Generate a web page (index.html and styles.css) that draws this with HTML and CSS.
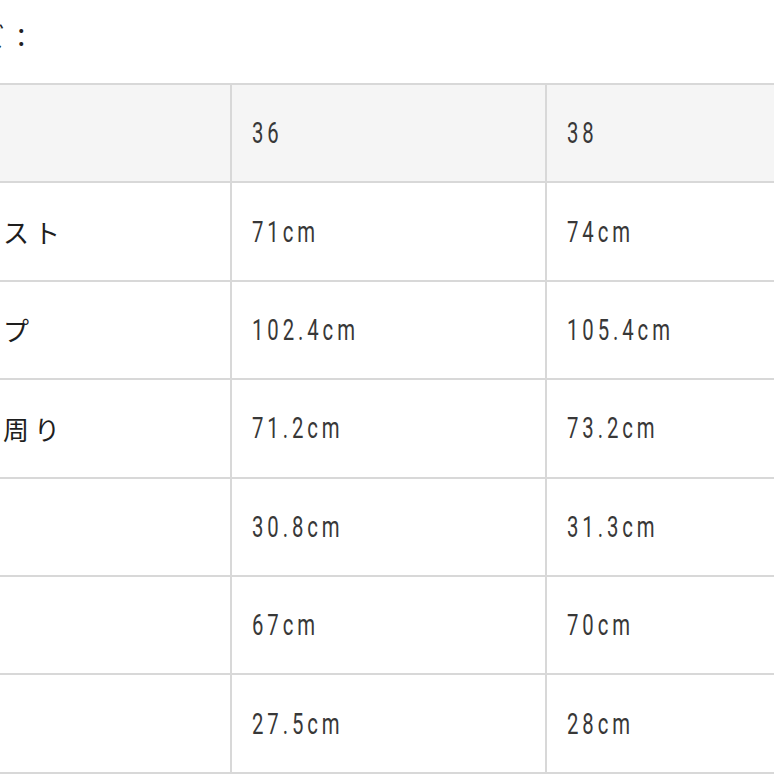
FILE: index.html
```html
<!DOCTYPE html>
<html lang="ja">
<head>
<meta charset="utf-8">
<title>サイズ表</title>
<link rel="stylesheet" href="styles.css">
</head>
<body>
<div class="page">
  <div class="inner">
    <p class="note">サイズ：</p>
    <table class="size-table">
      <colgroup>
        <col class="col-label">
        <col class="col-size">
        <col class="col-size">
      </colgroup>
      <thead>
        <tr>
          <th class="label"></th>
          <th class="value"><span class="num">36</span></th>
          <th class="value"><span class="num">38</span></th>
        </tr>
      </thead>
      <tbody>
        <tr><td class="label">ウエスト</td><td class="value"><span class="num">71cm</span></td><td class="value"><span class="num">74cm</span></td></tr>
        <tr><td class="label">ヒップ</td><td class="value"><span class="num">102.4cm</span></td><td class="value"><span class="num">105.4cm</span></td></tr>
        <tr><td class="label">もも周り</td><td class="value"><span class="num">71.2cm</span></td><td class="value"><span class="num">73.2cm</span></td></tr>
        <tr><td class="label">股上</td><td class="value"><span class="num">30.8cm</span></td><td class="value"><span class="num">31.3cm</span></td></tr>
        <tr><td class="label">股下</td><td class="value"><span class="num">67cm</span></td><td class="value"><span class="num">70cm</span></td></tr>
        <tr><td class="label">裾幅</td><td class="value"><span class="num">27.5cm</span></td><td class="value"><span class="num">28cm</span></td></tr>
      </tbody>
    </table>
  </div>
</div>
</body>
</html>
```
FILE: styles.css
```css
html, body {
  margin: 0;
  padding: 0;
  background: #ffffff;
}

.page {
  width: 774px;
  height: 774px;
  overflow: hidden;
}

.inner {
  margin-left: -81px;
}

.note {
  margin: 0;
  height: 83px;
  padding-top: 21px;
  box-sizing: border-box;
  font-family: "Noto Sans CJK JP", sans-serif;
  font-size: 26px;
  line-height: 30px;
  letter-spacing: 4px;
  color: #222222;
}

.size-table {
  border-collapse: collapse;
  table-layout: fixed;
  width: 941px;
  border: 2px solid #d8d8d8;
}

.col-label {
  width: 311px;
}

.col-size {
  width: 315px;
}

.size-table tr {
  height: 98.4px;
}

.size-table th,
.size-table td {
  border: 2px solid #d8d8d8;
  padding: 0 20px;
  text-align: left;
  vertical-align: middle;
  font-weight: normal;
  white-space: nowrap;
}

.size-table thead th {
  background: #f5f5f5;
}

.label {
  font-family: "Noto Sans CJK JP", sans-serif;
  font-size: 26px;
  letter-spacing: 5px;
  color: #1e1e1e;
}

.value {
  font-family: Roboto, "DejaVu Sans", sans-serif;
  font-size: 29px;
  font-weight: 300;
  color: #383838;
}

.num {
  display: inline-block;
  letter-spacing: 5.6px;
  transform: scaleX(0.7);
  transform-origin: left center;
}
```
